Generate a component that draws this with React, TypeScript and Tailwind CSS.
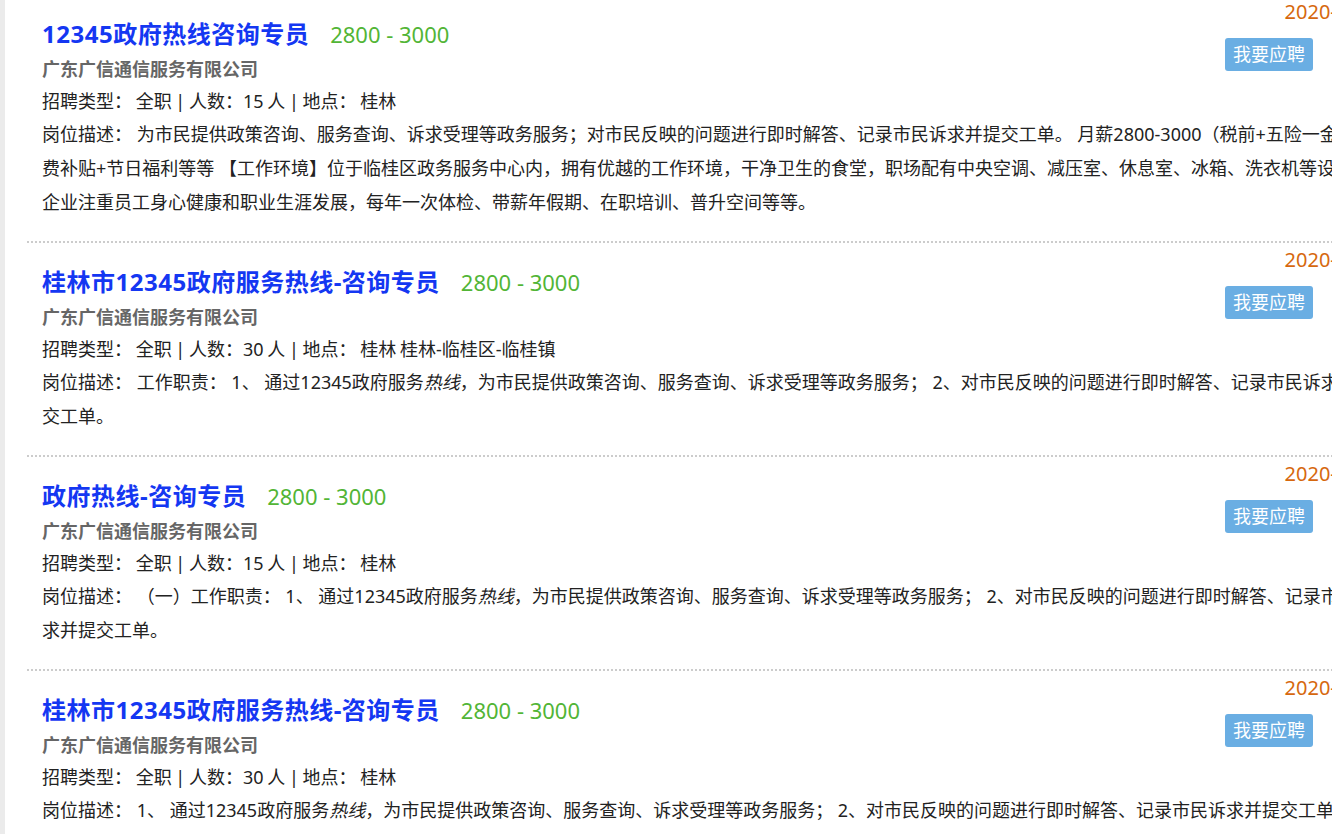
import React from "react";

type Job = {
  date: string;
  title: string;
  salary: string;
  count: string;
  place: string;
  desc: React.ReactNode[];
};

const Hot = () => <em className="italic">热线</em>;

const jobs: Job[] = [
  {
    date: "2020-07-20",
    title: "12345政府热线咨询专员",
    salary: "2800 - 3000",
    count: "15",
    place: "桂林",
    desc: [
      <>岗位描述： 为市民提供政策咨询、服务查询、诉求受理等政务服务；对市民反映的问题进行即时解答、记录市民诉求并提交工单。 月薪2800-3000（税前+五险一金、餐</>,
      <>费补贴+节日福利等等 【工作环境】位于临桂区政务服务中心内，拥有优越的工作环境，干净卫生的食堂，职场配有中央空调、减压室、休息室、冰箱、洗衣机等设施，</>,
      <>企业注重员工身心健康和职业生涯发展，每年一次体检、带薪年假期、在职培训、普升空间等等。</>,
    ],
  },
  {
    date: "2020-07-18",
    title: "桂林市12345政府服务热线-咨询专员",
    salary: "2800 - 3000",
    count: "30",
    place: "桂林 桂林-临桂区-临桂镇",
    desc: [
      <>岗位描述： 工作职责： 1、 通过12345政府服务<Hot />，为市民提供政策咨询、服务查询、诉求受理等政务服务； 2、对市民反映的问题进行即时解答、记录市民诉求并提</>,
      <>交工单。</>,
    ],
  },
  {
    date: "2020-07-16",
    title: "政府热线-咨询专员",
    salary: "2800 - 3000",
    count: "15",
    place: "桂林",
    desc: [
      <>岗位描述： （一）工作职责： 1、 通过12345政府服务<Hot />，为市民提供政策咨询、服务查询、诉求受理等政务服务； 2、对市民反映的问题进行即时解答、记录市民诉</>,
      <>求并提交工单。</>,
    ],
  },
  {
    date: "2020-07-15",
    title: "桂林市12345政府服务热线-咨询专员",
    salary: "2800 - 3000",
    count: "30",
    place: "桂林",
    desc: [
      <>岗位描述： 1、 通过12345政府服务<Hot />，为市民提供政策咨询、服务查询、诉求受理等政务服务； 2、对市民反映的问题进行即时解答、记录市民诉求并提交工单。</>,
    ],
  },
];

function JobItem({ job, first }: { job: Job; first: boolean }) {
  return (
    <div
      className={
        "ml-[22px] w-[1390px] pl-[15px] pr-[28px] pb-[22px] " +
        (first ? "pt-[2px]" : "pt-[7px] border-t-2 border-dotted border-[#cccccc]")
      }
    >
      <div className="h-[16px] text-right text-[20px] leading-[20px] text-[#d6680e] whitespace-nowrap">
        {job.date}
      </div>
      <div className="flex">
        <div className="flex-1">
          <div className="flex items-center h-[32px] whitespace-nowrap">
            <span className="text-[24px] font-bold text-[#1437f2] leading-[32px] tracking-[0.5px]">{job.title}</span>
            <span className="ml-[21px] text-[22px] text-[#52b536] leading-[32px]">{job.salary}</span>
          </div>
          <div className="mt-[3px] text-[18px] leading-[32px] font-bold text-[#666666]">
            广东广信通信服务有限公司
          </div>
          <div className="text-[18px] leading-[32px] text-[#222222] whitespace-nowrap [word-spacing:-1px]">
            招聘类型： 全职 | 人数：{job.count} 人 | 地点： {job.place}
          </div>
        </div>
        <div className="pt-[20px] mr-[76px]">
          <button className="h-[33px] px-[8px] rounded-[3px] bg-[#6aaee3] text-white text-[18px] leading-[33px]">
            我要应聘
          </button>
        </div>
      </div>
      <div className="text-[18px] leading-[34px] text-[#222222]">
        {job.desc.map((l, i) => (
          <div key={i} className="whitespace-nowrap">
            {l}
          </div>
        ))}
      </div>
    </div>
  );
}

export default function App() {
  return (
    <div
      className="w-[1332px] h-[834px] overflow-hidden bg-white"
      style={{ fontFamily: "'Noto Sans', 'Noto Sans CJK SC', sans-serif" }}
    >
      <div className="border-l-[5px] border-[#ebebeb] min-h-[834px] w-[1500px]">
        {jobs.map((j, i) => (
          <JobItem key={i} job={j} first={i === 0} />
        ))}
      </div>
    </div>
  );
}
